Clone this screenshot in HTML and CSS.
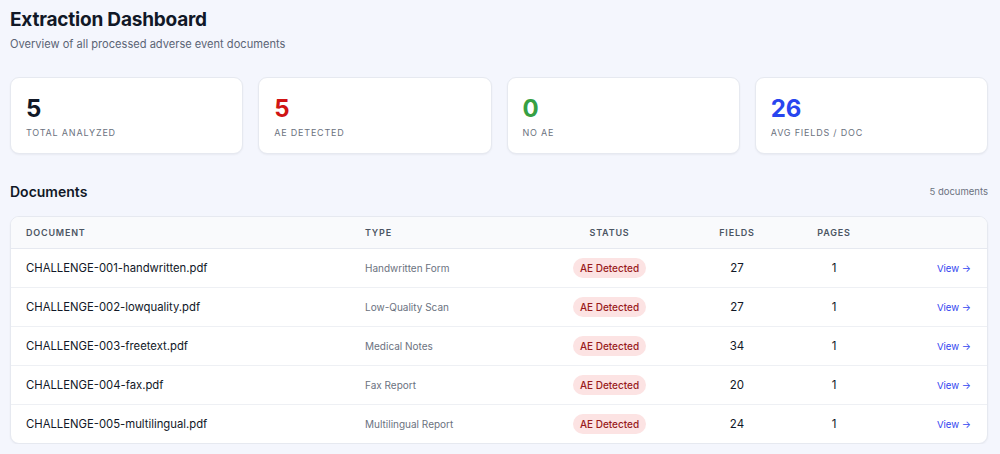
FILE: index.html
```html
<!DOCTYPE html>
<html>
<head>
<meta charset="utf-8">
<link rel="stylesheet" href="styles.css">
</head>
<body>
<main class="page">
  <header class="page-head">
    <h1 class="title">Extraction Dashboard</h1>
    <p class="subtitle">Overview of all processed adverse event documents</p>
  </header>

  <section class="stats">
    <div class="card"><div class="num">5</div><div class="label">Total Analyzed</div></div>
    <div class="card"><div class="num red">5</div><div class="label">AE Detected</div></div>
    <div class="card"><div class="num green">0</div><div class="label">No AE</div></div>
    <div class="card"><div class="num blue">26</div><div class="label">Avg Fields / Doc</div></div>
  </section>

  <div class="section-head">
    <h2 class="section-title">Documents</h2>
    <span class="count">5 documents</span>
  </div>

  <div class="table-wrap">
    <table class="docs">
      <colgroup>
        <col class="c-doc"><col class="c-type"><col class="c-status"><col class="c-fields"><col class="c-pages"><col class="c-act">
      </colgroup>
      <thead>
        <tr><th>Document</th><th>Type</th><th class="center">Status</th><th class="center">Fields</th><th class="center">Pages</th><th></th></tr>
      </thead>
      <tbody>
        <tr><td class="name">CHALLENGE-001-handwritten.pdf</td><td class="type">Handwritten Form</td><td class="center"><span class="badge">AE Detected</span></td><td class="center n">27</td><td class="center n">1</td><td class="act"><a class="view">View →</a></td></tr>
        <tr><td class="name">CHALLENGE-002-lowquality.pdf</td><td class="type">Low-Quality Scan</td><td class="center"><span class="badge">AE Detected</span></td><td class="center n">27</td><td class="center n">1</td><td class="act"><a class="view">View →</a></td></tr>
        <tr><td class="name">CHALLENGE-003-freetext.pdf</td><td class="type">Medical Notes</td><td class="center"><span class="badge">AE Detected</span></td><td class="center n">34</td><td class="center n">1</td><td class="act"><a class="view">View →</a></td></tr>
        <tr><td class="name">CHALLENGE-004-fax.pdf</td><td class="type">Fax Report</td><td class="center"><span class="badge">AE Detected</span></td><td class="center n">20</td><td class="center n">1</td><td class="act"><a class="view">View →</a></td></tr>
        <tr><td class="name">CHALLENGE-005-multilingual.pdf</td><td class="type">Multilingual Report</td><td class="center"><span class="badge">AE Detected</span></td><td class="center n">24</td><td class="center n">1</td><td class="act"><a class="view">View →</a></td></tr>
      </tbody>
    </table>
  </div>
</main>
</body>
</html>
```

FILE: styles.css
```css
* { box-sizing: border-box; }
html, body { margin: 0; padding: 0; }
body {
  background: #f4f6fd;
  font-family: Inter, "Liberation Sans", Arial, sans-serif;
  color: #111827;
}
.page { padding: 8px 12px 0 10px; }
.title {
  margin: 0;
  font-size: 19px;
  font-weight: 700;
  line-height: 24px;
  letter-spacing: -0.2px;
  color: #111827;
}
.subtitle {
  margin: 4px 0 0;
  font-size: 11.1px;
  line-height: 16px;
  color: #5b6475;
}
.stats {
  display: grid;
  grid-template-columns: repeat(4, 1fr);
  gap: 15px;
  margin-top: 25px;
}
.card {
  background: #fff;
  border: 1px solid #e6e9f0;
  border-radius: 9px;
  height: 77px;
  padding: 17px 15px 0;
  box-shadow: 0 1px 2px rgba(16, 24, 40, 0.05);
}
.num {
  font-size: 24px;
  font-weight: 700;
  line-height: 28px;
  color: #111827;
}
.num.red { color: #d01414; }
.num.green { color: #36a043; }
.num.blue { color: #2845ef; }
.label {
  margin-top: 3px;
  font-size: 9px;
  line-height: 14px;
  text-transform: uppercase;
  letter-spacing: 0.8px;
  color: #6b7280;
}
.section-head {
  display: flex;
  justify-content: space-between;
  align-items: center;
  margin-top: 26px;
  height: 22px;
}
.section-title {
  margin: 0;
  font-size: 14px;
  font-weight: 600;
  color: #111827;
}
.count { font-size: 9.5px; color: #6b7280; }
.table-wrap {
  margin-top: 14px;
  background: #fff;
  border: 1px solid #e6e9f0;
  border-radius: 9px;
  overflow: hidden;
  box-shadow: 0 1px 2px rgba(16, 24, 40, 0.05);
}
.docs {
  width: 100%;
  border-collapse: collapse;
  table-layout: fixed;
}
.c-doc { width: 339px; }
.c-type { width: 195px; }
.c-status { width: 129px; }
.c-fields { width: 126px; }
.c-pages { width: 68px; }
.c-act { width: auto; }
.docs th {
  height: 31px;
  padding: 0 15px;
  text-align: left;
  font-size: 9px;
  font-weight: 600;
  letter-spacing: 0.8px;
  text-transform: uppercase;
  color: #4b5563;
  background: #f9fafc;
  border-bottom: 1px solid #e6e9f0;
}
.docs td {
  height: 39px;
  padding: 0 15px;
  border-bottom: 1px solid #eef0f4;
  font-size: 11.3px;
  color: #111827;
}
.docs tbody tr:last-child td { border-bottom: none; }
.docs .center { text-align: center; padding: 0; }
.docs td.type { font-size: 10px; color: #6b7280; }
.docs td.n { font-size: 11.5px; }
.badge {
  display: inline-block;
  padding: 0 7px;
  height: 20px;
  line-height: 20px;
  border-radius: 10px;
  background: #fce3e3;
  color: #991b1b;
  font-size: 10px;
  font-weight: 500;
}
.docs td.act { text-align: right; padding-right: 16px; }
.view { font-size: 9.6px; color: #3145f0; text-decoration: none; }
```
